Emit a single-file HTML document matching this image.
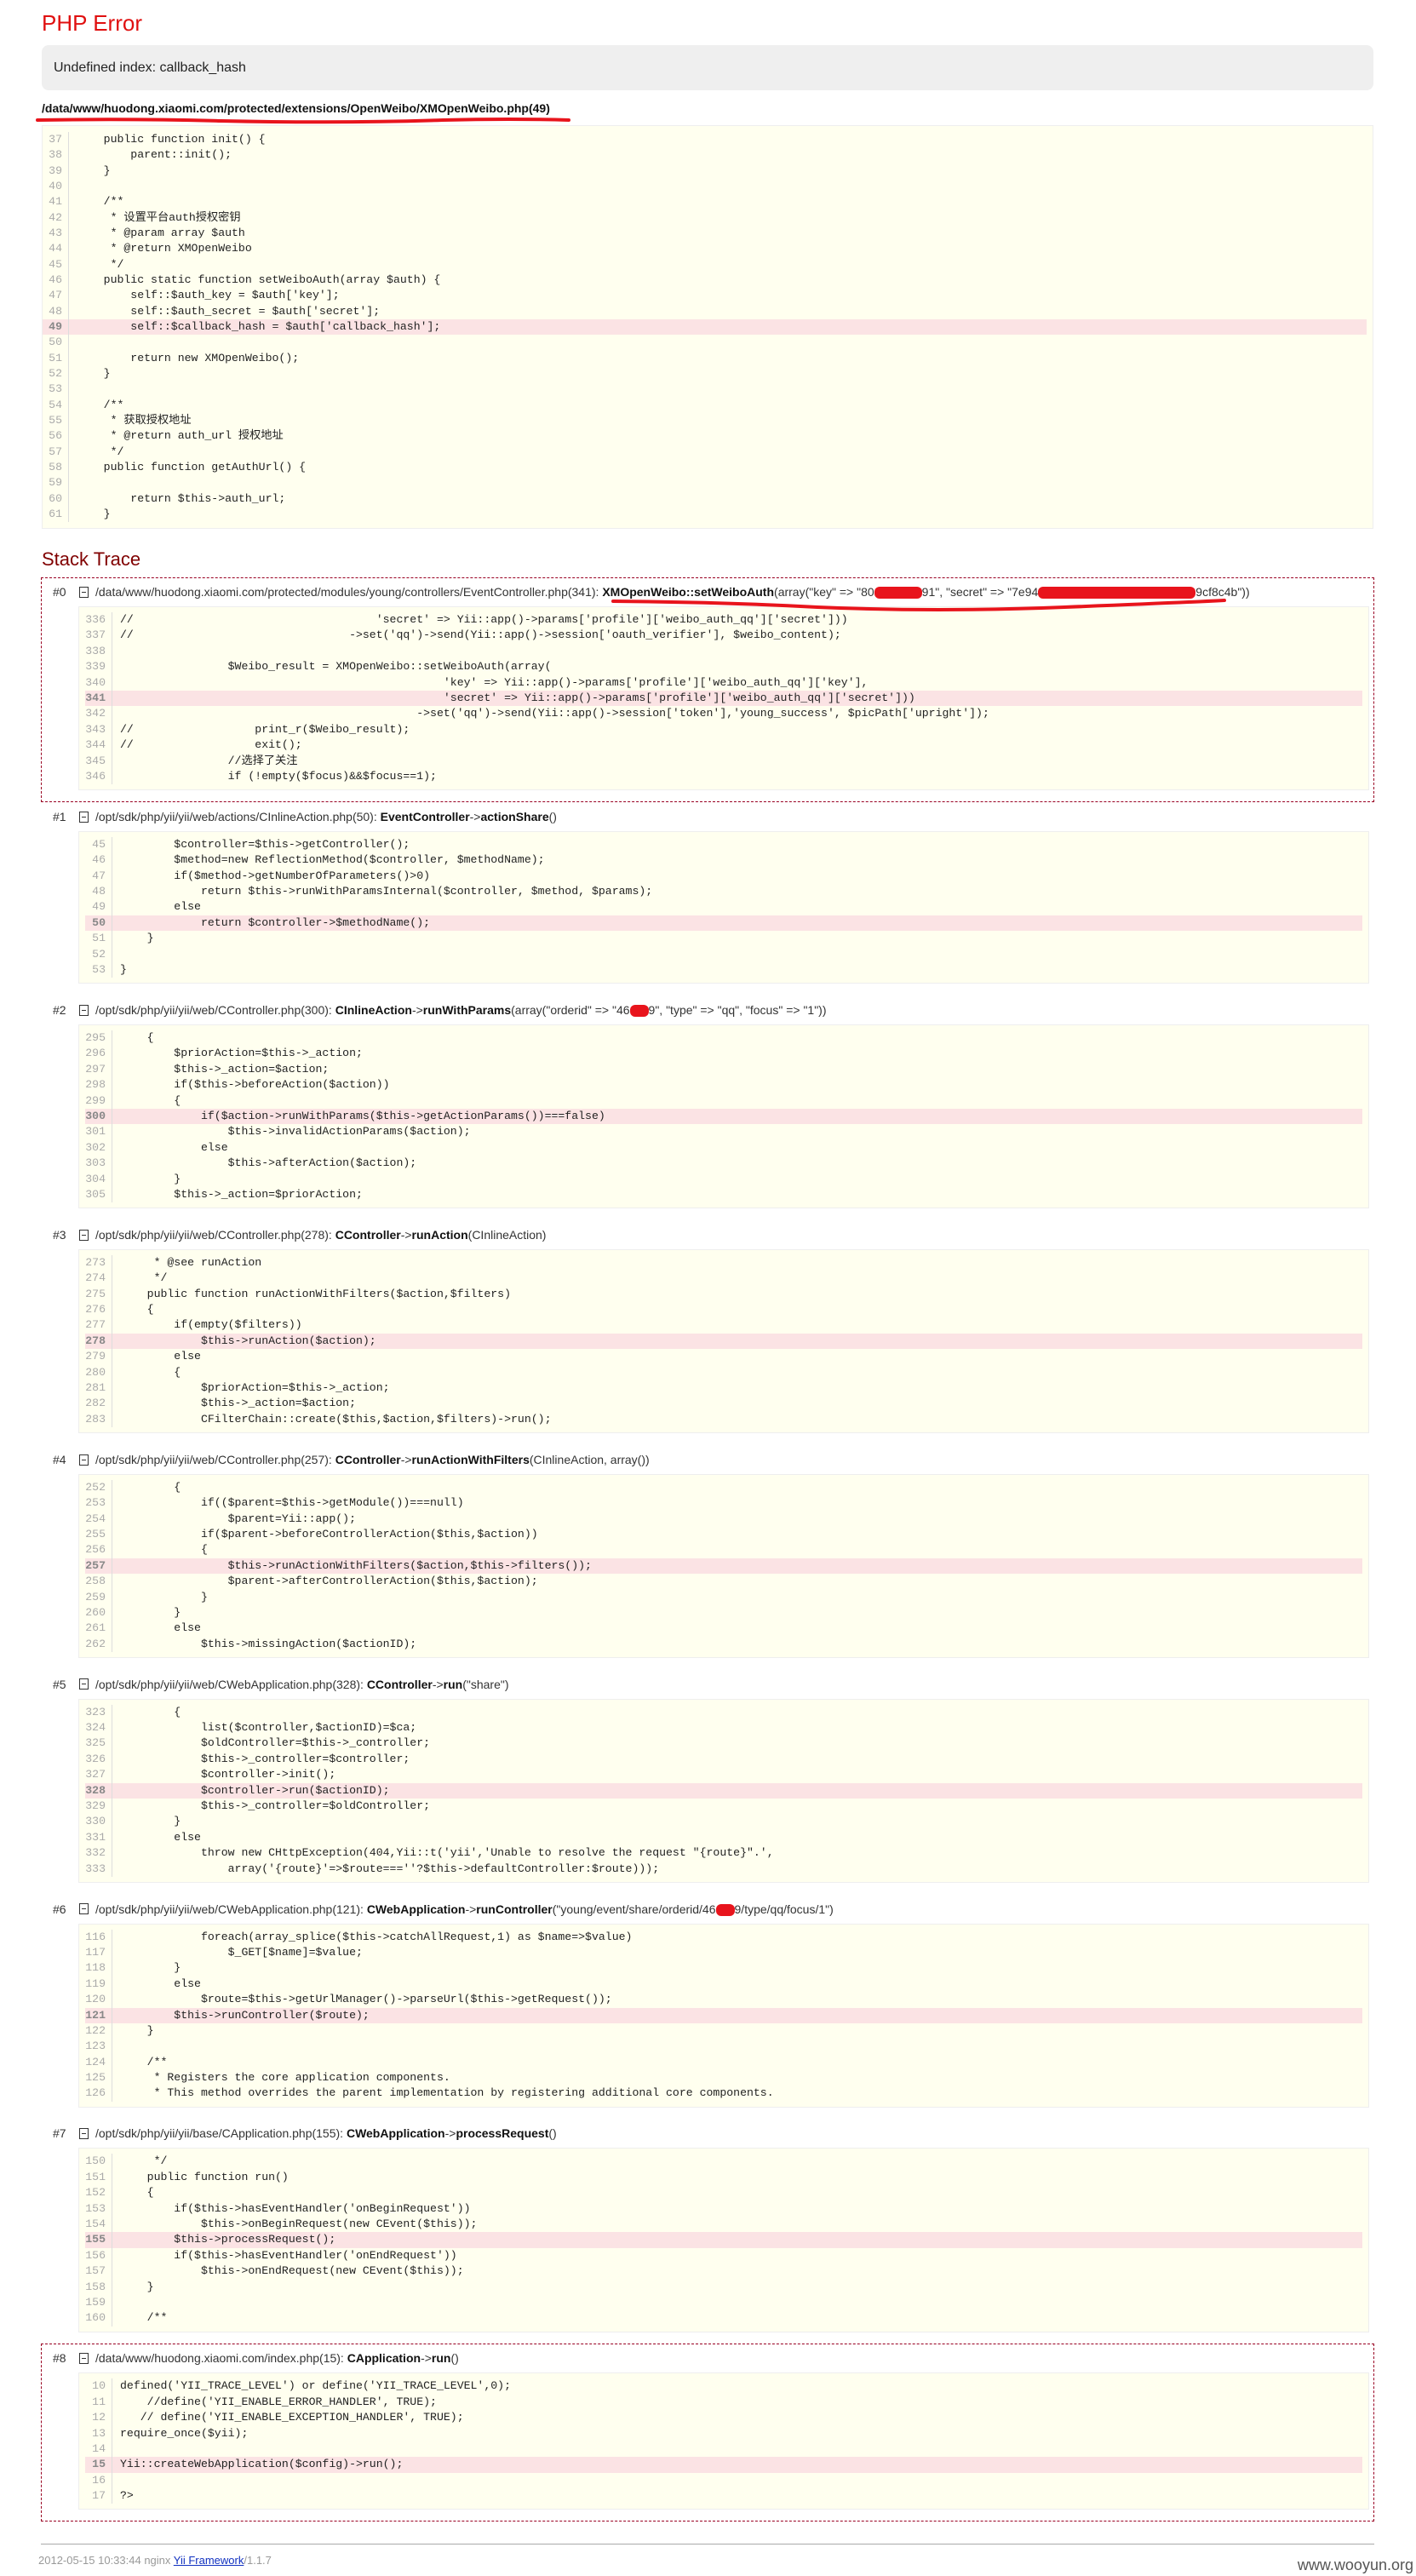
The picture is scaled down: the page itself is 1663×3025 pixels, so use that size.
<!DOCTYPE html>
<html><head><meta charset="utf-8">
<style>
*{margin:0;padding:0;box-sizing:border-box}
body{width:1663px;height:3025px;background:#fff;position:relative;font-family:"Liberation Sans","Noto Sans CJK SC",sans-serif;color:#333;overflow:hidden}
h1{position:absolute;left:49px;top:10px;font-size:26px;font-weight:normal;color:#e01010;line-height:34px}
.msg{position:absolute;left:49px;top:53px;width:1564px;height:53px;background:#efefef;border-radius:8px;font-size:16px;line-height:53px;padding-left:14px;color:#222}
.fpath{position:absolute;left:49px;top:117px;font-size:14px;font-weight:bold;line-height:20px;color:#111}
.code{background:#ffffef;border:1px solid #eee;font-family:"Liberation Mono","Noto Sans CJK SC",monospace;font-size:13.2px;white-space:normal;color:#222;overflow:hidden}
.top{position:absolute;left:49px;top:147px;width:1564px;height:474px;padding:7px 7px 7px 0}
.top .ln{line-height:18.33px;height:18.33px}
.ln{display:flex;overflow:hidden}
.ln .n{color:#aaa;text-align:right;border-right:1px solid #ddd;padding-right:7px;white-space:pre;flex:none}
.top .n{width:31px}
.ln .c{padding-left:9px;flex:1;white-space:pre}
.ln.hl{background:#fbe3e4}
.ln.hl .n{color:#888;font-weight:bold}
h2{position:absolute;left:49px;top:642px;font-size:22px;font-weight:normal;color:#800000;line-height:30px}
.traces{position:absolute;left:48px;top:678px;width:1566px}
.fr{border:1px dashed transparent;padding-bottom:12.6px}
.fr.app{border-color:#990022}
.hd{height:33px;line-height:33px;font-size:14px;white-space:nowrap;position:relative;padding-left:13px;color:#333}
.hd .num{display:inline-block;width:31px}
.tg{display:inline-block;width:11px;height:13px;border:1px solid #333;vertical-align:middle;position:relative;margin-right:8px;top:-1px}
.tg:after{content:"";position:absolute;left:2px;right:2px;top:5px;height:1px;background:#333}
.hd b{color:#111}
.red{display:inline-block;background:#e8141c;color:transparent;border-radius:6px;height:14px;vertical-align:middle}
.tb{margin-left:43px;width:1516px;padding:6px 7px 6px 7px}
.tb .ln{line-height:18.4px;height:18.4px}
.tb .n{width:32px}
.tb .c{padding-left:9px}
.foot{position:absolute;left:48px;top:2987px;width:1566px;border-top:1px solid #aaa}
.ft{position:absolute;left:45px;top:2999px;font-size:13px;color:#999;font-family:"Liberation Sans",sans-serif}
.ft a{color:#1030c0;text-decoration:underline}
.wy{position:absolute;right:3px;top:3002px;font-size:18px;color:#555}
svg.ov{position:absolute;left:0;top:0}
</style></head><body>
<h1>PHP Error</h1>
<div class="msg">Undefined index: callback_hash</div>
<div class="fpath">/data/www/huodong.xiaomi.com/protected/extensions/OpenWeibo/XMOpenWeibo.php(49)</div>
<div class="code top">
<div class="ln"><span class="n">37</span><span class="c">    public function init() {</span></div>
<div class="ln"><span class="n">38</span><span class="c">        parent::init();</span></div>
<div class="ln"><span class="n">39</span><span class="c">    }</span></div>
<div class="ln"><span class="n">40</span><span class="c"></span></div>
<div class="ln"><span class="n">41</span><span class="c">    /**</span></div>
<div class="ln"><span class="n">42</span><span class="c">     * 设置平台auth授权密钥</span></div>
<div class="ln"><span class="n">43</span><span class="c">     * @param array $auth</span></div>
<div class="ln"><span class="n">44</span><span class="c">     * @return XMOpenWeibo</span></div>
<div class="ln"><span class="n">45</span><span class="c">     */</span></div>
<div class="ln"><span class="n">46</span><span class="c">    public static function setWeiboAuth(array $auth) {</span></div>
<div class="ln"><span class="n">47</span><span class="c">        self::$auth_key = $auth['key'];</span></div>
<div class="ln"><span class="n">48</span><span class="c">        self::$auth_secret = $auth['secret'];</span></div>
<div class="ln hl"><span class="n">49</span><span class="c">        self::$callback_hash = $auth['callback_hash'];</span></div>
<div class="ln"><span class="n">50</span><span class="c"></span></div>
<div class="ln"><span class="n">51</span><span class="c">        return new XMOpenWeibo();</span></div>
<div class="ln"><span class="n">52</span><span class="c">    }</span></div>
<div class="ln"><span class="n">53</span><span class="c"></span></div>
<div class="ln"><span class="n">54</span><span class="c">    /**</span></div>
<div class="ln"><span class="n">55</span><span class="c">     * 获取授权地址</span></div>
<div class="ln"><span class="n">56</span><span class="c">     * @return auth_url 授权地址</span></div>
<div class="ln"><span class="n">57</span><span class="c">     */</span></div>
<div class="ln"><span class="n">58</span><span class="c">    public function getAuthUrl() {</span></div>
<div class="ln"><span class="n">59</span><span class="c"></span></div>
<div class="ln"><span class="n">60</span><span class="c">        return $this-&gt;auth_url;</span></div>
<div class="ln"><span class="n">61</span><span class="c">    }</span></div>
</div>

<h2>Stack Trace</h2>
<div class="traces">

<div class="fr app">
<div class="hd"><span class="num">#0</span><span class="tg"></span>/data/www/huodong.xiaomi.com/protected/modules/young/controllers/EventController.php(341): <b>XMOpenWeibo::setWeiboAuth</b>(array("key" =&gt; "80<span class="red" style="width:56px"></span>91", "secret" =&gt; "7e94<span class="red" style="width:185px"></span>9cf8c4b"))</div>
<div class="code tb">
<div class="ln"><span class="n">336</span><span class="c">//                                    'secret' =&gt; Yii::app()-&gt;params['profile']['weibo_auth_qq']['secret']))</span></div>
<div class="ln"><span class="n">337</span><span class="c">//                                -&gt;set('qq')-&gt;send(Yii::app()-&gt;session['oauth_verifier'], $weibo_content);</span></div>
<div class="ln"><span class="n">338</span><span class="c"></span></div>
<div class="ln"><span class="n">339</span><span class="c">                $Weibo_result = XMOpenWeibo::setWeiboAuth(array(</span></div>
<div class="ln"><span class="n">340</span><span class="c">                                                'key' =&gt; Yii::app()-&gt;params['profile']['weibo_auth_qq']['key'],</span></div>
<div class="ln hl"><span class="n">341</span><span class="c">                                                'secret' =&gt; Yii::app()-&gt;params['profile']['weibo_auth_qq']['secret']))</span></div>
<div class="ln"><span class="n">342</span><span class="c">                                            -&gt;set('qq')-&gt;send(Yii::app()-&gt;session['token'],'young_success', $picPath['upright']);</span></div>
<div class="ln"><span class="n">343</span><span class="c">//                  print_r($Weibo_result);</span></div>
<div class="ln"><span class="n">344</span><span class="c">//                  exit();</span></div>
<div class="ln"><span class="n">345</span><span class="c">                //选择了关注</span></div>
<div class="ln"><span class="n">346</span><span class="c">                if (!empty($focus)&amp;&amp;$focus==1);</span></div>
</div>
</div>

<div class="fr">
<div class="hd"><span class="num">#1</span><span class="tg"></span>/opt/sdk/php/yii/yii/web/actions/CInlineAction.php(50): <b>EventController</b>-&gt;<b>actionShare</b>()</div>
<div class="code tb">
<div class="ln"><span class="n">45</span><span class="c">        $controller=$this-&gt;getController();</span></div>
<div class="ln"><span class="n">46</span><span class="c">        $method=new ReflectionMethod($controller, $methodName);</span></div>
<div class="ln"><span class="n">47</span><span class="c">        if($method-&gt;getNumberOfParameters()&gt;0)</span></div>
<div class="ln"><span class="n">48</span><span class="c">            return $this-&gt;runWithParamsInternal($controller, $method, $params);</span></div>
<div class="ln"><span class="n">49</span><span class="c">        else</span></div>
<div class="ln hl"><span class="n">50</span><span class="c">            return $controller-&gt;$methodName();</span></div>
<div class="ln"><span class="n">51</span><span class="c">    }</span></div>
<div class="ln"><span class="n">52</span><span class="c"></span></div>
<div class="ln"><span class="n">53</span><span class="c">}</span></div>
</div>
</div>

<div class="fr">
<div class="hd"><span class="num">#2</span><span class="tg"></span>/opt/sdk/php/yii/yii/web/CController.php(300): <b>CInlineAction</b>-&gt;<b>runWithParams</b>(array("orderid" =&gt; "46<span class="red" style="width:22px"></span>9", "type" =&gt; "qq", "focus" =&gt; "1"))</div>
<div class="code tb">
<div class="ln"><span class="n">295</span><span class="c">    {</span></div>
<div class="ln"><span class="n">296</span><span class="c">        $priorAction=$this-&gt;_action;</span></div>
<div class="ln"><span class="n">297</span><span class="c">        $this-&gt;_action=$action;</span></div>
<div class="ln"><span class="n">298</span><span class="c">        if($this-&gt;beforeAction($action))</span></div>
<div class="ln"><span class="n">299</span><span class="c">        {</span></div>
<div class="ln hl"><span class="n">300</span><span class="c">            if($action-&gt;runWithParams($this-&gt;getActionParams())===false)</span></div>
<div class="ln"><span class="n">301</span><span class="c">                $this-&gt;invalidActionParams($action);</span></div>
<div class="ln"><span class="n">302</span><span class="c">            else</span></div>
<div class="ln"><span class="n">303</span><span class="c">                $this-&gt;afterAction($action);</span></div>
<div class="ln"><span class="n">304</span><span class="c">        }</span></div>
<div class="ln"><span class="n">305</span><span class="c">        $this-&gt;_action=$priorAction;</span></div>
</div>
</div>

<div class="fr">
<div class="hd"><span class="num">#3</span><span class="tg"></span>/opt/sdk/php/yii/yii/web/CController.php(278): <b>CController</b>-&gt;<b>runAction</b>(CInlineAction)</div>
<div class="code tb">
<div class="ln"><span class="n">273</span><span class="c">     * @see runAction</span></div>
<div class="ln"><span class="n">274</span><span class="c">     */</span></div>
<div class="ln"><span class="n">275</span><span class="c">    public function runActionWithFilters($action,$filters)</span></div>
<div class="ln"><span class="n">276</span><span class="c">    {</span></div>
<div class="ln"><span class="n">277</span><span class="c">        if(empty($filters))</span></div>
<div class="ln hl"><span class="n">278</span><span class="c">            $this-&gt;runAction($action);</span></div>
<div class="ln"><span class="n">279</span><span class="c">        else</span></div>
<div class="ln"><span class="n">280</span><span class="c">        {</span></div>
<div class="ln"><span class="n">281</span><span class="c">            $priorAction=$this-&gt;_action;</span></div>
<div class="ln"><span class="n">282</span><span class="c">            $this-&gt;_action=$action;</span></div>
<div class="ln"><span class="n">283</span><span class="c">            CFilterChain::create($this,$action,$filters)-&gt;run();</span></div>
</div>
</div>

<div class="fr">
<div class="hd"><span class="num">#4</span><span class="tg"></span>/opt/sdk/php/yii/yii/web/CController.php(257): <b>CController</b>-&gt;<b>runActionWithFilters</b>(CInlineAction, array())</div>
<div class="code tb">
<div class="ln"><span class="n">252</span><span class="c">        {</span></div>
<div class="ln"><span class="n">253</span><span class="c">            if(($parent=$this-&gt;getModule())===null)</span></div>
<div class="ln"><span class="n">254</span><span class="c">                $parent=Yii::app();</span></div>
<div class="ln"><span class="n">255</span><span class="c">            if($parent-&gt;beforeControllerAction($this,$action))</span></div>
<div class="ln"><span class="n">256</span><span class="c">            {</span></div>
<div class="ln hl"><span class="n">257</span><span class="c">                $this-&gt;runActionWithFilters($action,$this-&gt;filters());</span></div>
<div class="ln"><span class="n">258</span><span class="c">                $parent-&gt;afterControllerAction($this,$action);</span></div>
<div class="ln"><span class="n">259</span><span class="c">            }</span></div>
<div class="ln"><span class="n">260</span><span class="c">        }</span></div>
<div class="ln"><span class="n">261</span><span class="c">        else</span></div>
<div class="ln"><span class="n">262</span><span class="c">            $this-&gt;missingAction($actionID);</span></div>
</div>
</div>

<div class="fr">
<div class="hd"><span class="num">#5</span><span class="tg"></span>/opt/sdk/php/yii/yii/web/CWebApplication.php(328): <b>CController</b>-&gt;<b>run</b>("share")</div>
<div class="code tb">
<div class="ln"><span class="n">323</span><span class="c">        {</span></div>
<div class="ln"><span class="n">324</span><span class="c">            list($controller,$actionID)=$ca;</span></div>
<div class="ln"><span class="n">325</span><span class="c">            $oldController=$this-&gt;_controller;</span></div>
<div class="ln"><span class="n">326</span><span class="c">            $this-&gt;_controller=$controller;</span></div>
<div class="ln"><span class="n">327</span><span class="c">            $controller-&gt;init();</span></div>
<div class="ln hl"><span class="n">328</span><span class="c">            $controller-&gt;run($actionID);</span></div>
<div class="ln"><span class="n">329</span><span class="c">            $this-&gt;_controller=$oldController;</span></div>
<div class="ln"><span class="n">330</span><span class="c">        }</span></div>
<div class="ln"><span class="n">331</span><span class="c">        else</span></div>
<div class="ln"><span class="n">332</span><span class="c">            throw new CHttpException(404,Yii::t('yii','Unable to resolve the request "{route}".',</span></div>
<div class="ln"><span class="n">333</span><span class="c">                array('{route}'=&gt;$route===''?$this-&gt;defaultController:$route)));</span></div>
</div>
</div>

<div class="fr">
<div class="hd"><span class="num">#6</span><span class="tg"></span>/opt/sdk/php/yii/yii/web/CWebApplication.php(121): <b>CWebApplication</b>-&gt;<b>runController</b>("young/event/share/orderid/46<span class="red" style="width:22px"></span>9/type/qq/focus/1")</div>
<div class="code tb">
<div class="ln"><span class="n">116</span><span class="c">            foreach(array_splice($this-&gt;catchAllRequest,1) as $name=&gt;$value)</span></div>
<div class="ln"><span class="n">117</span><span class="c">                $_GET[$name]=$value;</span></div>
<div class="ln"><span class="n">118</span><span class="c">        }</span></div>
<div class="ln"><span class="n">119</span><span class="c">        else</span></div>
<div class="ln"><span class="n">120</span><span class="c">            $route=$this-&gt;getUrlManager()-&gt;parseUrl($this-&gt;getRequest());</span></div>
<div class="ln hl"><span class="n">121</span><span class="c">        $this-&gt;runController($route);</span></div>
<div class="ln"><span class="n">122</span><span class="c">    }</span></div>
<div class="ln"><span class="n">123</span><span class="c"></span></div>
<div class="ln"><span class="n">124</span><span class="c">    /**</span></div>
<div class="ln"><span class="n">125</span><span class="c">     * Registers the core application components.</span></div>
<div class="ln"><span class="n">126</span><span class="c">     * This method overrides the parent implementation by registering additional core components.</span></div>
</div>
</div>

<div class="fr">
<div class="hd"><span class="num">#7</span><span class="tg"></span>/opt/sdk/php/yii/yii/base/CApplication.php(155): <b>CWebApplication</b>-&gt;<b>processRequest</b>()</div>
<div class="code tb">
<div class="ln"><span class="n">150</span><span class="c">     */</span></div>
<div class="ln"><span class="n">151</span><span class="c">    public function run()</span></div>
<div class="ln"><span class="n">152</span><span class="c">    {</span></div>
<div class="ln"><span class="n">153</span><span class="c">        if($this-&gt;hasEventHandler('onBeginRequest'))</span></div>
<div class="ln"><span class="n">154</span><span class="c">            $this-&gt;onBeginRequest(new CEvent($this));</span></div>
<div class="ln hl"><span class="n">155</span><span class="c">        $this-&gt;processRequest();</span></div>
<div class="ln"><span class="n">156</span><span class="c">        if($this-&gt;hasEventHandler('onEndRequest'))</span></div>
<div class="ln"><span class="n">157</span><span class="c">            $this-&gt;onEndRequest(new CEvent($this));</span></div>
<div class="ln"><span class="n">158</span><span class="c">    }</span></div>
<div class="ln"><span class="n">159</span><span class="c"></span></div>
<div class="ln"><span class="n">160</span><span class="c">    /**</span></div>
</div>
</div>

<div class="fr app">
<div class="hd"><span class="num">#8</span><span class="tg"></span>/data/www/huodong.xiaomi.com/index.php(15): <b>CApplication</b>-&gt;<b>run</b>()</div>
<div class="code tb">
<div class="ln"><span class="n">10</span><span class="c">defined('YII_TRACE_LEVEL') or define('YII_TRACE_LEVEL',0);</span></div>
<div class="ln"><span class="n">11</span><span class="c">    //define('YII_ENABLE_ERROR_HANDLER', TRUE);</span></div>
<div class="ln"><span class="n">12</span><span class="c">   // define('YII_ENABLE_EXCEPTION_HANDLER', TRUE);</span></div>
<div class="ln"><span class="n">13</span><span class="c">require_once($yii);</span></div>
<div class="ln"><span class="n">14</span><span class="c"></span></div>
<div class="ln hl"><span class="n">15</span><span class="c">Yii::createWebApplication($config)-&gt;run();</span></div>
<div class="ln"><span class="n">16</span><span class="c"></span></div>
<div class="ln"><span class="n">17</span><span class="c">?&gt;</span></div>
</div>
</div>

</div>

<div class="foot"></div>
<div class="ft">2012-05-15 10:33:44 nginx <a>Yii Framework</a>/1.1.7</div>
<div class="wy">www.wooyun.org</div>

<svg class="ov" width="1663" height="3025" viewBox="0 0 1663 3025">
<path d="M44 141 Q150 139 260 142 Q400 145 520 141 Q600 139 668 141" stroke="#e8141c" stroke-width="4" fill="none" stroke-linecap="round"/>
<path d="M720 706 Q850 707 960 713 Q1100 719 1250 713 Q1380 708 1438 705" stroke="#e8141c" stroke-width="4" fill="none" stroke-linecap="round"/>
</svg>
</body></html>
